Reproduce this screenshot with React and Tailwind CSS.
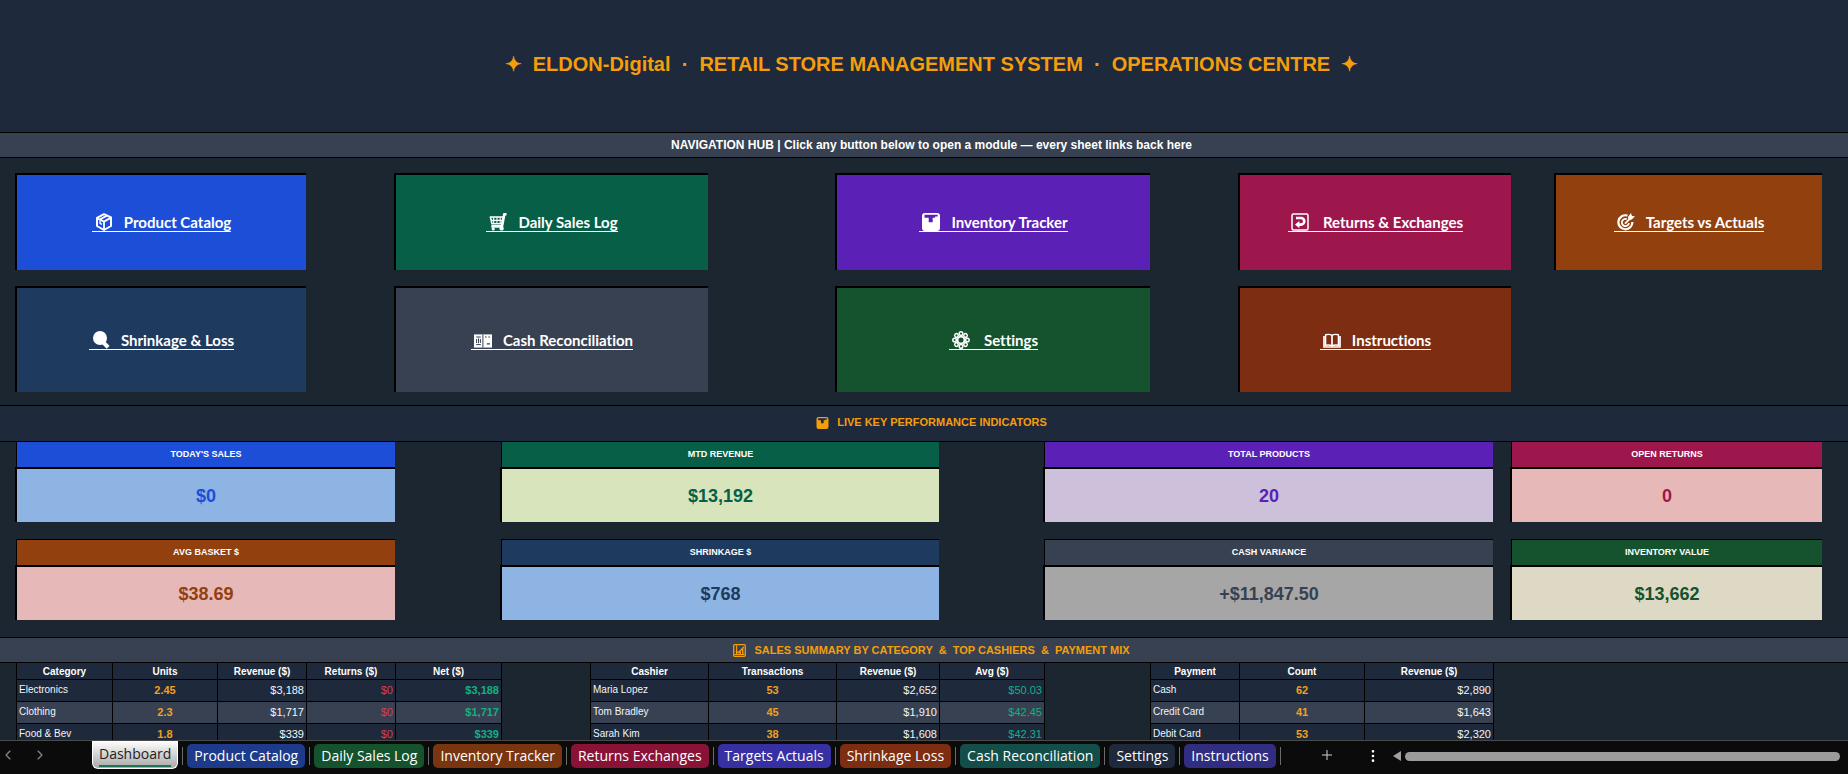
import React, { useState } from 'react';
import { ChevronLeft, ChevronRight, Plus, EllipsisVertical } from 'lucide-react';

// Every section shares the column tracks of the sheet
const SHEET_GRID = 'grid grid-cols-[16fr_96fr_105fr_89fr_89fr_106fr_89fr_118fr_128fr_103fr_105fr_106fr_89fr_125fr_129fr_18fr_44fr_267fr_26fr]';

const Icon = ({ children, className = 'w-[18px] h-[18px]' }) => (
  <svg viewBox="0 0 18 18" className={`shrink-0 ${className}`} fill="none" stroke="currentColor" strokeWidth="1.8" strokeLinejoin="round" aria-hidden="true">
    {children}
  </svg>
);

const BoxIcon = () => (
  <Icon>
    <path d="M9 1.2 16 4.4V13L9 17 2 13V4.8Z" strokeWidth="2" />
    <path d="M2 5.2 9 8.6 16 4.6M9 8.6V17M5.2 6.2 12 2.6" />
    <path d="M5 7.4v3l2 1" strokeWidth="1.4" />
  </Icon>
);

const CartIcon = () => (
  <Icon>
    <path d="M17.5 1.2h-2.2L13 13.2H2.5" strokeWidth="2.6" />
    <path d="M1.4 4h12.8l-1.4 6.8H3Z" strokeWidth="1.6" />
    <path d="M4.7 4v6.8M8 4v6.8M11.2 4v6.8M2 7.4h11.5" strokeWidth="1.1" />
    <path d="M2.5 13.5h11" strokeWidth="1.8" />
    <circle cx="4.2" cy="15.9" r="1.6" fill="currentColor" stroke="none" />
    <circle cx="12.6" cy="15.4" r="2.2" fill="currentColor" stroke="none" />
  </Icon>
);

const ChartIcon = ({ className }) => (
  <Icon className={className}>
    <path
      d="M3 0h12a3 3 0 0 1 3 3v12a3 3 0 0 1-3 3H3a3 3 0 0 1-3-3V3a3 3 0 0 1 3-3ZM2.5 1.8v3h4.2v4.4h4V4.8h2.4V3.6h2.6V1.8Z"
      fill="currentColor"
      fillRule="evenodd"
      stroke="none"
    />
  </Icon>
);

const ReturnIcon = () => (
  <Icon>
    <rect x="1" y="1" width="16" height="16" rx="1.5" strokeWidth="1.5" />
    <path d="M5 5h5a3.3 3.3 0 0 1 0 6.6H7.5" strokeWidth="2.6" />
    <path d="M8.4 7.9v7.4L4 11.6Z" fill="currentColor" stroke="none" />
  </Icon>
);

const TargetIcon = () => (
  <Icon>
    <path d="M10.5 2.6A7 7 0 1 0 15.4 9" strokeWidth="2.2" />
    <path d="M9.8 6.2a3.6 3.6 0 1 0 2.2 4" strokeWidth="1.8" />
    <path d="m8 10.6 6-6" strokeWidth="1.9" />
    <path d="m11 4 3-4 .8 2.800 3.200.800-3.600 3.200-3 .200Z" fill="currentColor" stroke="none" />
  </Icon>
);

const LensIcon = () => (
  <Icon>
    <circle cx="8" cy="7" r="7" fill="currentColor" stroke="none" />
    <path d="m11.5 11.5 4.6 4.8" strokeWidth="4" />
  </Icon>
);

const CashIcon = () => (
  <Icon>
    <path d="M0 3.4h18v13.2H0Z" fill="currentColor" stroke="none" />
    <path d="M8.9 3.6v13" stroke="#374151" strokeWidth="1" />
    <path d="M2.2 6h4.6M2.2 13.6h4.6M2.6 8v4M6.4 8v4M4.5 7.4v4.8" stroke="#374151" strokeWidth="1" />
    <path d="M11 6h1.6M14.4 6H16M12.8 12.8H16" stroke="#374151" strokeWidth="1.2" />
  </Icon>
);

const PETALS = [0, 45, 90, 135, 180, 225, 270, 315];

const GearIcon = () => (
  <Icon>
    <circle cx="9" cy="9" r="3.4" strokeWidth="1.7" />
    {PETALS.map(angle => (
      <circle key={angle} cx="9" cy="2.6" r="1.8" strokeWidth="1.5" transform={`rotate(${angle} 9 9)`} />
    ))}
  </Icon>
);

const BookIcon = () => (
  <Icon>
    <path d="M2.6 3.8C5 3.2 7.4 3.3 9 4.4c1.6-1.1 4-1.2 6.4-.6v10.4c-2.4-.4-4.8-.3-6.4.6-1.6-.9-4-1-6.4-.6Z" strokeWidth="1.4" />
    <path d="M9 4.4v10.2M1 5v11h16V5" strokeWidth="1.7" />
  </Icon>
);

const TrendIcon = ({ className }) => (
  <Icon className={className}>
    <rect x="1" y="1" width="16" height="16" rx="1.5" strokeWidth="1.8" />
    <path d="M5 2v13M2 14.5h14" strokeWidth="1.6" />
    <path d="m4 10 3.5 2L15 4M10 9v6M13.5 6v9" strokeWidth="1.9" />
  </Icon>
);

const modules = [
  { label: 'Product Catalog', icon: BoxIcon, color: 'bg-[#1d4ed8]', place: 'col-start-2 col-end-5' },
  { label: 'Daily Sales Log', icon: CartIcon, color: 'bg-[#065f46]', place: 'col-start-6 col-end-9' },
  { label: 'Inventory Tracker', icon: ChartIcon, color: 'bg-[#5b21b6]', place: 'col-start-10 col-end-13' },
  { label: 'Returns & Exchanges', icon: ReturnIcon, color: 'bg-[#9d174d]', place: 'col-start-14 col-end-17', wide: true },
  { label: 'Targets vs Actuals', icon: TargetIcon, color: 'bg-[#92400e]', place: 'col-start-18 col-end-19' },
  { label: 'Shrinkage & Loss', icon: LensIcon, color: 'bg-[#1e3a5f]', place: 'col-start-2 col-end-5' },
  { label: 'Cash Reconciliation', icon: CashIcon, color: 'bg-[#374151]', place: 'col-start-6 col-end-9' },
  { label: 'Settings', icon: GearIcon, color: 'bg-[#14532d]', place: 'col-start-10 col-end-13', wide: true },
  { label: 'Instructions', icon: BookIcon, color: 'bg-[#7c2d12]', place: 'col-start-14 col-end-17' },
];

const kpis = [
  { label: "TODAY'S SALES", value: '$0', head: 'bg-[#1d4ed8]', body: 'bg-[#8db4e2] text-[#1d4ed8]', place: 'col-start-2 col-end-6' },
  { label: 'MTD REVENUE', value: '$13,192', head: 'bg-[#065f46]', body: 'bg-[#d8e4bc] text-[#065f46]', place: 'col-start-7 col-end-11' },
  { label: 'TOTAL PRODUCTS', value: '20', head: 'bg-[#5b21b6]', body: 'bg-[#ccc0da] text-[#5b21b6]', place: 'col-start-12 col-end-16' },
  { label: 'OPEN RETURNS', value: '0', head: 'bg-[#9d174d]', body: 'bg-[#e6b8b7] text-[#9d174d]', place: 'col-start-17 col-end-19' },
  { label: 'AVG BASKET $', value: '$38.69', head: 'bg-[#92400e]', body: 'bg-[#e6b8b7] text-[#92400e]', place: 'col-start-2 col-end-6' },
  { label: 'SHRINKAGE $', value: '$768', head: 'bg-[#1e3a5f]', body: 'bg-[#8db4e2] text-[#1e3a5f]', place: 'col-start-7 col-end-11' },
  { label: 'CASH VARIANCE', value: '+$11,847.50', head: 'bg-[#374151]', body: 'bg-[#a6a6a6] text-[#374151]', place: 'col-start-12 col-end-16' },
  { label: 'INVENTORY VALUE', value: '$13,662', head: 'bg-[#14532d]', body: 'bg-[#ddd9c4] text-[#14532d]', place: 'col-start-17 col-end-19' },
];

const NAME = 'text-left text-[10px] leading-5 pb-px text-slate-100';
const COUNT = 'text-center text-[11px] leading-[21px] font-bold text-[#f0a020]';
const MONEY = 'text-right text-[11px] leading-[21px] text-slate-100';
const LOSS = 'text-right text-[11px] leading-[21px] text-[#dc3d4b]';
const GAIN = 'text-right text-[11px] leading-[21px] text-[#14b083]';

const tables = [
  {
    place: 'col-start-2 col-end-7',
    columns: [
      { title: 'Category', width: 96, style: NAME },
      { title: 'Units', width: 105, style: COUNT },
      { title: 'Revenue ($)', width: 89, style: MONEY },
      { title: 'Returns ($)', width: 89, style: LOSS },
      { title: 'Net ($)', width: 106, style: `${GAIN} font-bold` },
    ],
    rows: [
      ['Electronics', '2.45', '$3,188', '$0', '$3,188'],
      ['Clothing', '2.3', '$1,717', '$0', '$1,717'],
      ['Food & Bev', '1.8', '$339', '$0', '$339'],
    ],
  },
  {
    place: 'col-start-8 col-end-12',
    columns: [
      { title: 'Cashier', width: 118, style: NAME },
      { title: 'Transactions', width: 128, style: COUNT },
      { title: 'Revenue ($)', width: 103, style: MONEY },
      { title: 'Avg ($)', width: 105, style: GAIN },
    ],
    rows: [
      ['Maria Lopez', '53', '$2,652', '$50.03'],
      ['Tom Bradley', '45', '$1,910', '$42.45'],
      ['Sarah Kim', '38', '$1,608', '$42.31'],
    ],
  },
  {
    place: 'col-start-13 col-end-16',
    columns: [
      { title: 'Payment', width: 89, style: NAME },
      { title: 'Count', width: 125, style: COUNT },
      { title: 'Revenue ($)', width: 129, style: MONEY },
    ],
    rows: [
      ['Cash', '62', '$2,890'],
      ['Credit Card', '41', '$1,643'],
      ['Debit Card', '53', '$2,320'],
    ],
  },
];

const sheets = [
  { name: 'Dashboard', color: '' },
  { name: 'Product Catalog', color: 'bg-[#1e3a8a]' },
  { name: 'Daily Sales Log', color: 'bg-[#14532d]' },
  { name: 'Inventory Tracker', color: 'bg-[#78350f]' },
  { name: 'Returns Exchanges', color: 'bg-[#881337]' },
  { name: 'Targets Actuals', color: 'bg-[#3730a3]' },
  { name: 'Shrinkage Loss', color: 'bg-[#7c2d12]' },
  { name: 'Cash Reconciliation', color: 'bg-[#134e4a]' },
  { name: 'Settings', color: 'bg-[#1e293b]' },
  { name: 'Instructions', color: 'bg-[#312e81]' },
];

const ModuleButton = ({ module }) => {
  const Glyph = module.icon;
  return (
    <a href="#" className={`-ml-px flex items-center justify-center border-l-2 border-t-2 border-black text-white ${module.color} ${module.place}`}>
      <span className={`flex items-end border-b border-white pl-[3px] font-['Lato',sans-serif] text-[15px] leading-[18px] font-bold [font-variant-ligatures:none] ${module.wide ? 'gap-[14px]' : 'gap-[11px]'}`}>
        <Glyph />
        {module.label}
      </span>
    </a>
  );
};

const KpiCard = ({ kpi }) => (
  <div className={`-ml-px text-center font-bold ${kpi.place}`}>
    <div className={`ml-px h-[26px] border-l border-t border-black text-[9px] leading-[25px] text-white ${kpi.head}`}>{kpi.label}</div>
    <div className={`h-[55px] border-l-2 border-t-2 border-black text-lg leading-[54px] ${kpi.body}`}>{kpi.value}</div>
  </div>
);

const SummaryTable = ({ table }) => {
  const total = table.columns.reduce((sum, c) => sum + c.width, 0);
  return (
    <div className={`-mr-px ${table.place}`}>
      <table className="w-full table-fixed border-separate border-spacing-0 border-r border-black">
        <colgroup>
          {table.columns.map(c => <col key={c.title} style={{ width: `${(c.width / total) * 100}%` }} />)}
        </colgroup>
        <thead>
          <tr className="bg-[#1e293b]">
            {table.columns.map(c => (
              <th key={c.title} className="border-b border-l border-black p-0 pt-0.5 text-[10px] leading-[14px] font-bold text-white">{c.title}</th>
            ))}
          </tr>
        </thead>
        <tbody>
          {table.rows.map(row => (
            <tr key={row[0]} className="bg-[#1e293b] even:bg-[#374151]">
              {row.map((cell, i) => (
                <td key={i} className={`border-b border-l border-black px-0.5 ${table.columns[i].style}`}>{cell}</td>
              ))}
            </tr>
          ))}
        </tbody>
      </table>
    </div>
  );
};

const SheetTabs = ({ active, onSelect }) => (
  <footer className="flex h-[34px] shrink-0 items-start border-t border-[#4a4a4a] bg-[#0b0b0b] font-['Open_Sans',sans-serif] text-white">
    <div className="flex w-[92px] shrink-0 items-center gap-4 pt-1.5 text-[#8a8a8a]">
      <button aria-label="Previous sheet"><ChevronLeft size={16} strokeWidth={1.75} /></button>
      <button aria-label="Next sheet"><ChevronRight size={16} strokeWidth={1.75} /></button>
    </div>
    <div className="flex shrink-0">
      {sheets.map(sheet => (
        <div key={sheet.name} className="flex">
          {sheet.name === active ? (
            <button className="h-7 rounded-b-md border border-t-0 border-white bg-linear-to-b from-white to-[#a9a9a9] px-1.5 text-sm text-[#222]">
              <span className="block h-6 border-b-2 border-[#217358] leading-[22px] font-medium">{sheet.name}</span>
            </button>
          ) : (
            <button onClick={() => onSelect(sheet.name)} className={`mt-[3px] h-6 rounded-[5px] px-[7px] text-sm ${sheet.color}`}>
              {sheet.name}
            </button>
          )}
          <span className="mx-1 mt-1.5 h-[18px] w-px bg-[#6b6b6b]" />
        </div>
      ))}
    </div>
    <button aria-label="New sheet" className="ml-[34px] pt-1.5 text-[#d0d0d0]"><Plus size={16} strokeWidth={1.5} /></button>
    <button aria-label="More options" className="ml-[30px] pt-[7px]"><EllipsisVertical size={16} /></button>
    <div className="ml-3 mt-[7px] flex h-4 flex-1 items-center gap-1 pr-2">
      <button aria-label="Scroll left" className="text-[#a0a0a0]">
        <svg viewBox="0 0 8 10" className="h-2.5 w-2" fill="currentColor"><path d="M8 0v10L0 5Z" /></svg>
      </button>
      <div className="h-[9px] flex-1 rounded-full bg-[#9b9b9b]" />
    </div>
  </footer>
);

const App = () => {
  const [active, setActive] = useState('Dashboard');

  return (
    <div className="flex h-screen flex-col bg-[#1c2630] font-['Liberation_Sans',Arial,sans-serif]">
      <main className="min-h-0 flex-1 overflow-hidden">
        <header className="flex h-[132px] items-center justify-center bg-[#1e293b] pb-1 pl-[15px]">
          <h1 className="whitespace-pre text-xl font-bold text-[#f59e0b]">{'✦  ELDON-Digital  ·  RETAIL STORE MANAGEMENT SYSTEM  ·  OPERATIONS CENTRE  ✦'}</h1>
        </header>

        <p className="h-[26px] border-y border-black bg-[#374151] pl-[15px] text-center text-xs leading-6 font-bold text-white">
          NAVIGATION HUB | Click any button below to open a module — every sheet links back here
        </p>

        <nav className={`${SHEET_GRID} grid-rows-[97px_106px] gap-y-4 pt-[15px] pb-[13px]`}>
          {modules.map(module => <ModuleButton key={module.label} module={module} />)}
        </nav>

        <h2 className="flex h-[37px] items-center justify-center gap-2 border-y border-black bg-[#1e293b] pb-0.5 pl-[15px] text-[11px] font-bold text-[#f59e0b]">
          <ChartIcon className="h-3 w-[13px]" />
          LIVE KEY PERFORMANCE INDICATORS
        </h2>

        <section className={`${SHEET_GRID} -mt-px gap-y-[17px] pb-[17px]`}>
          {kpis.map(kpi => <KpiCard key={kpi.label} kpi={kpi} />)}
        </section>

        <h2 className="flex h-[26px] items-center justify-center gap-2 border-y border-black bg-[#374151] pl-[15px] text-[11px] font-bold whitespace-pre text-[#f59e0b]">
          <TrendIcon className="h-[13px] w-[13px]" />
          {'SALES SUMMARY BY CATEGORY  &  TOP CASHIERS  &  PAYMENT MIX'}
        </h2>

        <section className={SHEET_GRID}>
          {tables.map(table => <SummaryTable key={table.place} table={table} />)}
        </section>
      </main>

      <SheetTabs active={active} onSelect={setActive} />
    </div>
  );
};

export default App;
